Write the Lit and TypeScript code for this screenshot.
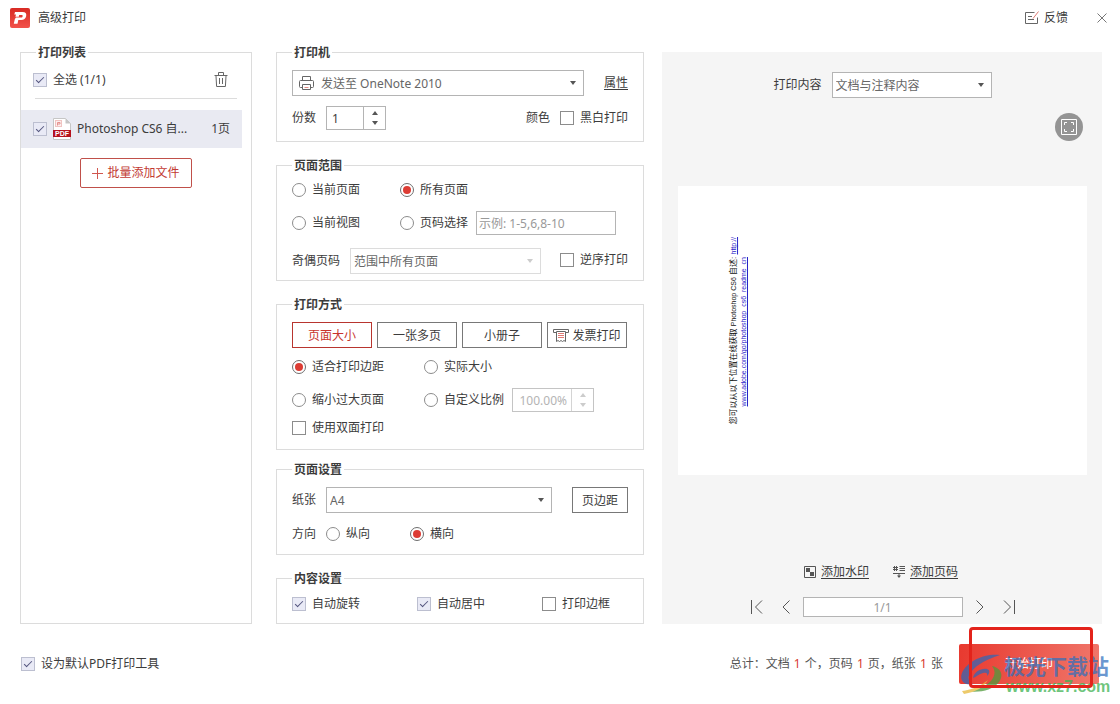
import { LitElement, html, css, nothing } from "lit";
import { customElement } from "lit/decorators.js";

type Opts = { checked?: boolean; disabled?: boolean };

@customElement("app-root")
export class AppRoot extends LitElement {
  static styles = css`
    :host {
      display: flex;
      flex-direction: column;
      min-height: 100vh;
      box-sizing: border-box;
      background: #fff;
      color: #3c3c3c;
      font: 12px/16px "Noto Sans", "Noto Sans CJK SC", sans-serif;
    }
    *, *::before, *::after { box-sizing: border-box; }
    button, input, select { font: inherit; color: inherit; margin: 0; border-radius: 0; outline: none; }
    button { padding: 0; border: 0; background: none; cursor: pointer; }
    svg { display: block; flex: none; }
    a { color: inherit; text-underline-offset: 2px; }

    .titlebar { display: flex; align-items: center; height: 36px; padding: 0 13px 0 10px; }
    .titlebar h1 { margin: 0 auto 0 8px; font: inherit; }
    .feedback { display: flex; align-items: center; gap: 4px; margin-right: 29px; }

    .main {
      flex: 1;
      display: grid;
      grid-template-columns: 232px 410px minmax(0, 1fr);
      padding: 8px 18px 0 20px;
    }
    .settings { margin: 0 18px 0 24px; display: flex; flex-direction: column; gap: 15px; }
    fieldset { margin: 0; min-width: 0; padding: 0 15px; border: 1px solid #dcdcdc; }
    legend { padding: 0 2px; font-weight: 700; line-height: 17px; }

    .list { padding: 0; }
    .list legend { margin-left: 15px; }
    .list-head {
      display: flex; align-items: center; justify-content: space-between;
      height: 38px; margin: 0 14px; padding: 0 9px 0 0;
      border-bottom: 1px solid #dcdcdc;
    }
    .list-head .opt { margin-left: -2px; }
    .file {
      display: flex; align-items: center; gap: 6px;
      height: 38px; margin: 11px 9px 10px 0; padding: 0 12px;
      background: #e9eaf2;
    }
    .file label { display: flex; align-items: center; gap: 6px; flex: 1; min-width: 0; }
    .file .name { flex: 1; }
    .add {
      display: flex; align-items: center; justify-content: center; gap: 4px;
      width: 112px; height: 30px; margin: 0 auto;
      border: 1px solid #c0504a; border-radius: 2px; color: #c23a33; background: #fff;
    }

    .row { display: flex; align-items: center; }
    .row > label, .row > span, .row > a { flex: none; }
    .h24 { height: 24px; }
    .top4 { margin-top: 4px; }
    .top8 { margin-top: 8px; }
    .top9 { margin-top: 9px; }
    .top10 { margin-top: 10px; }
    .top13 { margin-top: 13px; }
    .gap10 { gap: 10px; }
    .gap20 { gap: 20px; }
    .end { margin-left: auto; }
    .end-pad { padding-bottom: 11px; }
    .end-pad-s { padding-bottom: 6px; }
    .end-pad-l { padding-bottom: 13px; }
    .end-pad-m { padding-bottom: 12px; }
    .tight { margin-top: -4px; }
    .cell { display: flex; flex: none; }
    .c84 { width: 84px; }
    .c108 { width: 108px; }
    .c125 { width: 125px; }
    .c132 { width: 132px; }
    .opt { display: inline-flex; align-items: center; gap: 6px; white-space: nowrap; }

    input[type="checkbox"], input[type="radio"] {
      appearance: none; flex: none; width: 14px; height: 14px;
      border: 1px solid #8c8c8c; background: #fff; display: grid; place-items: center;
    }
    input[type="radio"] { border-radius: 50%; }
    input[type="radio"]:checked { border-color: #6e6e6e; }
    input[type="radio"]:checked::before { content: ""; width: 8px; height: 8px; border-radius: 50%; background: #dc3c34; }
    input[type="checkbox"]:checked { border-color: #bcbfd0; background: #e9eaf6; }
    input[type="checkbox"]:checked::before {
      content: ""; width: 8px; height: 4px; margin-top: -2px;
      border: solid #54557f; border-width: 0 0 1px 1px; transform: rotate(-45deg);
    }

    .select { position: relative; display: block; height: 26px; color: #666; }
    .select select {
      appearance: none; display: block; width: 100%; height: 100%; padding: 1px 22px 0 3px;
      border: 1px solid #b4b4b4; background: #fff; opacity: 1;
    }
    .select::after {
      content: ""; position: absolute; right: 8px; top: 11px;
      border: solid transparent; border-width: 4px 3px 0; border-top-color: #555;
    }
    .select .icon { position: absolute; left: 7px; top: 6px; }
    .select.with-icon select { padding-left: 28px; }
    .select.dim select { border-color: #dcdcdc; }
    .select.dim::after { border-top-color: #ccc; }
    .grow { flex: 1; }
    .w160 { width: 160px; }
    .w191 { width: 191px; }
    .w226 { width: 226px; }

    .text { height: 24px; padding: 1px 2px 0; border: 1px solid #b4b4b4; background: #fff; }
    .text::placeholder { color: #999; opacity: 1; }
    .range { width: 140px; margin-left: 8px; }

    .spin { display: flex; width: 60px; height: 24px; border: 1px solid #b4b4b4; background: #fff; }
    .spin.wide { width: 82px; margin-left: 8px; color: #b4b4b4; border-color: #c4c4c4; }
    .spin input { flex: 1; min-width: 0; padding: 1px 5px 0; border: 0; background: none; }
    .spin.wide input { padding: 1px 4px 0; text-align: right; }
    .arrows { display: flex; flex-direction: column; width: 22px; padding: 1px 0; border-left: 1px solid #b4b4b4; color: #555; }
    .wide .arrows { border-color: #d4d4d4; color: #ccc; }
    .arrows button { flex: 1; display: grid; place-items: center; }
    .arrows button::before { content: ""; border: solid transparent; border-width: 0 3px 4px; border-bottom-color: currentColor; }
    .arrows button:last-child::before { border-width: 4px 3px 0; border-top-color: currentColor; }

    .modes { display: grid; grid-template-columns: repeat(4, 80px); gap: 5px; margin: 9px 0 7px; }
    .btn { display: flex; align-items: center; justify-content: center; gap: 3px; height: 26px; padding: 1px 0 0; border: 1px solid #787878; background: #fff; }
    .btn.active { border-color: #b8352f; color: #c8342c; }
    .margins { width: 56px; }

    .preview {
      display: flex; flex-direction: column; align-items: center;
      margin-top: 8px; padding: 20px 15px 7px 16px; background: #f5f5f5;
    }
    .full { align-self: flex-end; margin: 15px 4px 45px 0; }
    .page {
      width: 100%; aspect-ratio: 409 / 289; background: #fff;
      display: flex; align-items: flex-end; padding: 0 0 51px 51px;
    }
    .sheet {
      margin: 0; writing-mode: vertical-rl; text-orientation: sideways; transform: rotate(180deg);
      font: 8px/10px "Liberation Sans", "Noto Sans CJK SC", sans-serif; color: #111; white-space: nowrap;
    }
    .sheet a { color: #2a22c8; text-underline-offset: 1px; }
    .sheet .latin { font-size: 7px; line-height: 1px; }
    .sheet .second { display: block; padding-inline-start: 18px; font-size: 7px; }
    .links { display: flex; gap: 24px; margin: auto 3px 17px 0; }
    .links a { display: flex; align-items: center; gap: 5px; text-decoration: none; }
    .links span { text-decoration: underline; }
    .pager { display: flex; align-items: center; gap: 9px; }
    .pager input { width: 160px; height: 20px; border: 1px solid #b4b4b4; text-align: center; color: #999; background: #fff; }
    .pager button { display: grid; place-items: center; width: 24px; height: 16px; }
    .pager button.near { width: 16px; }

    .footer { display: flex; align-items: center; height: 80px; padding: 0 21px; }
    .total { margin: 0 16px 0 auto; color: #555; }
    .total b { font-weight: 400; color: #d8392f; margin: 0 1px; }
    .start-wrap { position: relative; }
    .start {
      display: block; width: 140px; height: 40px; border-radius: 2px; color: #fff;
      background: linear-gradient(100deg, #e8392f, #f0786c);
    }
    .frame {
      position: absolute; left: 10px; top: -17px; width: 124px; height: 61px;
      border: 3px solid #e3231b; border-radius: 4px; pointer-events: none;
    }
    .mark { position: absolute; left: 0; top: 9px; display: flex; pointer-events: none; }
    .mark svg { opacity: 0.75; }
    .mark p { margin: 0; white-space: nowrap; font: 700 21px/24px "Noto Sans CJK SC", sans-serif; color: rgba(48, 112, 190, 0.72); }
    .mark small { display: block; padding-left: 2px; font: 700 16px/20px "Liberation Sans", sans-serif; color: rgba(62, 178, 82, 0.75); }
  `;

  private check(label: string, o: Opts = {}) {
    return html`<label class="opt"><input type="checkbox" ?checked=${o.checked ?? false} />${label}</label>`;
  }

  private radio(name: string, label: string, checked = false) {
    return html`<label class="opt"><input type="radio" name=${name} ?checked=${checked} />${label}</label>`;
  }

  private select(id: string, value: string, cls: string, icon: unknown = nothing, label: string = "") {
    return html`<div class="select ${cls}">
      <select id=${id} aria-label=${label || nothing} ?disabled=${cls.includes("dim")}><option>${value}</option></select>
      ${icon}
    </div>`;
  }

  private spin(id: string, value: string, o: Opts & { label?: string } = {}) {
    return html`<div class="spin ${o.disabled ? "wide" : ""}">
      <input id=${id} type="text" inputmode="decimal" .value=${value} aria-label=${o.label ?? nothing} ?disabled=${o.disabled ?? false} />
      <div class="arrows">
        <button type="button" aria-label="增加" ?disabled=${o.disabled ?? false}></button>
        <button type="button" aria-label="减少" ?disabled=${o.disabled ?? false}></button>
      </div>
    </div>`;
  }

  private printerIcon = html`<svg class="icon" width="15" height="15" viewBox="0 0 15 15" fill="none" stroke="#666">
    <path d="M3.5 4V.5h8V4M3 11.5H1.5a1 1 0 0 1-1-1v-5a1 1 0 0 1 1-1h12a1 1 0 0 1 1 1v5a1 1 0 0 1-1 1H12" />
    <path d="M3.5 8.5h8v5h-8z" /><path d="M5.500 11.500h4" stroke="#e08a84" />
  </svg>`;

  private titlebar() {
    return html`<header class="titlebar">
      <svg width="20" height="20" viewBox="0 0 20 20">
        <defs><linearGradient id="lg" x2="0" y2="1"><stop stop-color="#d82a24" /><stop offset="1" stop-color="#f2524a" /></linearGradient></defs>
        <rect width="20" height="20" rx="2" fill="url(#lg)" />
        <path d="M5 4h7.500c3 0 4.200 1.600 3.700 4-.5 2.600-2.300 4-5 4H8.300l-.8 3.700H3.800l1-4.400 1.100-1.700h5c.9 0 1.500-.4 1.700-1.200.2-.9-.2-1.400-1-1.400H9.200L8.800 8.800H5.400l.6-2.300H4.300z" fill="#fff" />
      </svg>
      <h1>高级打印</h1>
      <button class="feedback" type="button">
        <svg width="16" height="14" viewBox="0 0 16 14" fill="none" stroke="#666">
          <path d="M10.500 1.500h-9v11h12v-6M4 5.500h4M4 8.500h6" /><path d="M9 7.500 14.500.5" stroke="#e07a74" />
        </svg>反馈
      </button>
      <button type="button" aria-label="关闭">
        <svg width="10" height="10" viewBox="0 0 10 10" stroke="#777"><path d="m.5.5 9 9m0-9-9 9" /></svg>
      </button>
    </header>`;
  }

  private fileList() {
    return html`<fieldset class="list">
      <legend>打印列表</legend>
      <div class="list-head">
        ${this.check("全选 (1/1)", { checked: true })}
        <button type="button" aria-label="删除">
          <svg width="14" height="15" viewBox="0 0 14 15" fill="none" stroke="#666">
            <path d="M.5 3.500h13M4.500 3V.500h5V3M2 4l.6 10.500h8.800L12 4M5.500 6v6M8.500 6v6" />
          </svg>
        </button>
      </div>
      <div class="file">
        <label>
          <input type="checkbox" checked />
          <svg width="18" height="22" viewBox="0 0 18 22">
            <path d="M.5.5h12l5 5v16H.5z" fill="#fff" stroke="#c6c6c6" /><path d="M12.500.5v5h5z" fill="#c6c6c6" />
            <rect x="2.500" y="2.500" width="6" height="6" fill="#fdeeee" stroke="#f0c4c2" /><path d="M4.500 7.500v-3H7V6H4.500" fill="none" stroke="#e4938f" />
            <rect y="12" width="18" height="7" fill="#b5121e" />
            <text x="9" y="18" text-anchor="middle" font-family="Liberation Sans, sans-serif" font-size="7" font-weight="700" fill="#fff">PDF</text>
          </svg>
          <span class="name">Photoshop CS6 自...</span>
        </label>
        <span>1页</span>
      </div>
      <button class="add" type="button">
        <svg width="11" height="11" viewBox="0 0 11 11" stroke="#d0564f"><path d="M5.500 0v11M0 5.500h11" /></svg>批量添加文件
      </button>
    </fieldset>`;
  }

  private settings() {
    return html`<div class="settings">
      <fieldset class="end-pad">
        <legend>打印机</legend>
        <div class="row gap20 top9">
          ${this.select("printer", "发送至 OneNote 2010", "grow with-icon", this.printerIcon, "打印机")}
          <a href="#">属性</a>
        </div>
        <div class="row gap10 top10 h24">
          <label for="copies">份数</label>${this.spin("copies", "1")}
          <span class="end">颜色</span>${this.check("黑白打印")}
        </div>
      </fieldset>

      <fieldset class="end-pad-s">
        <legend>页面范围</legend>
        <div class="row h24 top4">
          <div class="cell c108">${this.radio("range", "当前页面")}</div>${this.radio("range", "所有页面", true)}
        </div>
        <div class="row h24 top9">
          <div class="cell c108">${this.radio("range", "当前视图")}</div>${this.radio("range", "页码选择")}
          <input class="text range" type="text" placeholder="示例: 1-5,6,8-10" aria-label="页码选择" />
        </div>
        <div class="row gap10 top13">
          <label for="parity">奇偶页码</label>${this.select("parity", "范围中所有页面", "w191 dim")}
          <span class="end">${this.check("逆序打印")}</span>
        </div>
      </fieldset>

      <fieldset class="end-pad-l">
        <legend>打印方式</legend>
        <div class="modes">
          <button class="btn active" type="button">页面大小</button>
          <button class="btn" type="button">一张多页</button>
          <button class="btn" type="button">小册子</button>
          <button class="btn" type="button">
            <svg width="16" height="13" viewBox="0 0 16 13" fill="none" stroke="#666">
              <path d="M3 3.500H.5v-3h15v3H13M3.500 2.500v10l1.500-1 1.500 1 1.500-1 1.500 1 1.500-1 1.500 1v-10z" />
              <path d="M5 4.500h6M5 6.500h6M5 8.500h6" stroke="#e07a74" />
            </svg>发票打印
          </button>
        </div>
        <div class="row h24">
          <div class="cell c132">${this.radio("scale", "适合打印边距", true)}</div>${this.radio("scale", "实际大小")}
        </div>
        <div class="row h24 top9">
          <div class="cell c132">${this.radio("scale", "缩小过大页面")}</div>${this.radio("scale", "自定义比例")}
          ${this.spin("ratio", "100.00%", { disabled: true, label: "自定义比例" })}
        </div>
        <div class="row top8">${this.check("使用双面打印")}</div>
      </fieldset>

      <fieldset class="end-pad-m tight">
        <legend>页面设置</legend>
        <div class="row gap10 top9">
          <label for="paper">纸张</label>${this.select("paper", "A4", "w226")}
          <button class="btn margins end" type="button">页边距</button>
        </div>
        <div class="row gap10 top13">
          <span>方向</span>
          <div class="row"><div class="cell c84">${this.radio("orient", "纵向")}</div>${this.radio("orient", "横向", true)}</div>
        </div>
      </fieldset>

      <fieldset class="end-pad">
        <legend>内容设置</legend>
        <div class="row top9">
          <div class="cell c125">${this.check("自动旋转", { checked: true })}</div>
          <div class="cell c125">${this.check("自动居中", { checked: true })}</div>
          ${this.check("打印边框")}
        </div>
      </fieldset>
    </div>`;
  }

  private preview() {
    return html`<section class="preview">
      <div class="row gap10">
        <label for="content">打印内容</label>${this.select("content", "文档与注释内容", "w160")}
      </div>
      <button class="full" type="button" aria-label="全屏">
        <svg width="28" height="28" viewBox="0 0 28 28" fill="none" stroke="#fff">
          <circle cx="14" cy="14" r="14" fill="#949494" stroke="none" />
          <path d="M6.500 6.500h15v15h-15zM9.500 12V9.500H12M16 9.500h2.500V12M18.500 16v2.500H16M12 18.500H9.500V16" />
        </svg>
      </button>
      <div class="page">
        <p class="sheet">您可以从以下位置在线获取 <span class="latin">Photoshop CS6</span> 自述: <a class="latin" href="#">http://</a><span class="second"><a href="#">www.adobe.com/go/photoshop_cs6_readme_cn</a></span></p>
      </div>
      <div class="links">
        <a href="#">
          <svg width="12" height="12" viewBox="0 0 12 12"><path d="M.5.5h11v11H.5z" fill="none" stroke="#555" /><path d="M2 2h4v4H2zM6 6h4v4H6z" fill="#555" /></svg>
          <span>添加水印</span>
        </a>
        <a href="#">
          <svg width="12" height="12" viewBox="0 0 12 12" fill="none" stroke="#555">
            <path d="M0 1.500h5M0 3.500h5M1.500 0v5M3.500 0v5M6.500.5H12M6.500 2.500H12M6.500 4.500H12M0 7.500h12M6 8v3" /><path d="M4 9.500h4l-2 2.500z" fill="#555" stroke="none" />
          </svg>
          <span>添加页码</span>
        </a>
      </div>
      <div class="pager">
        <button type="button" aria-label="首页"><svg width="12" height="14" viewBox="0 0 12 14" fill="none" stroke="#555"><path d="M.5 0v14M11 .5 4.500 7l6.500 6.500" /></svg></button>
        <button class="near" type="button" aria-label="上一页"><svg width="8" height="14" viewBox="0 0 8 14" fill="none" stroke="#555"><path d="M7.500.5 1 7l6.500 6.500" /></svg></button>
        <input type="text" .value=${"1/1"} aria-label="页码" />
        <button class="near" type="button" aria-label="下一页"><svg width="8" height="14" viewBox="0 0 8 14" fill="none" stroke="#555"><path d="M.5.5 7 7 .5 13.500" /></svg></button>
        <button type="button" aria-label="末页"><svg width="12" height="14" viewBox="0 0 12 14" fill="none" stroke="#555"><path d="M11.500 0v14M1 .5 7.500 7 1 13.500" /></svg></button>
      </div>
    </section>`;
  }

  private footer() {
    return html`<footer class="footer">
      ${this.check("设为默认PDF打印工具", { checked: true })}
      <p class="total">总计：文档 <b>1</b> 个，页码 <b>1</b> 页，纸张 <b>1</b> 张</p>
      <div class="start-wrap">
        <button class="start" type="button">开始打印</button>
        <div class="mark">
          <svg width="45" height="42" viewBox="0 0 45 42">
            <path d="M41 2C26 0 8 8 3 20c-3 8 3 13 11 11-5-3-6-7-2-12C18 11 29 6 41 2z" fill="#3567b4" />
            <path d="M14 25c1-6 8-10 14-9 3 1 3 4 0 7 1-3-1-4-4-3-4 1-7 4-10 5z" fill="#3567b4" />
            <path d="M33 13c9 2 12 9 7 16-7 9-20 11-34 9 11-1 20-4 26-10 4-5 5-10 1-15z" fill="#4f9a3c" />
            <path d="M3 38c10-1 20-6 26-11-4 7-12 12-24 14z" fill="#e8b93a" />
          </svg>
          <p>极光下载站<small>www.xz7.com</small></p>
        </div>
        <div class="frame"></div>
      </div>
    </footer>`;
  }

  render() {
    return html`${this.titlebar()}
      <main class="main">${this.fileList()}${this.settings()}${this.preview()}</main>
      ${this.footer()}`;
  }
}
